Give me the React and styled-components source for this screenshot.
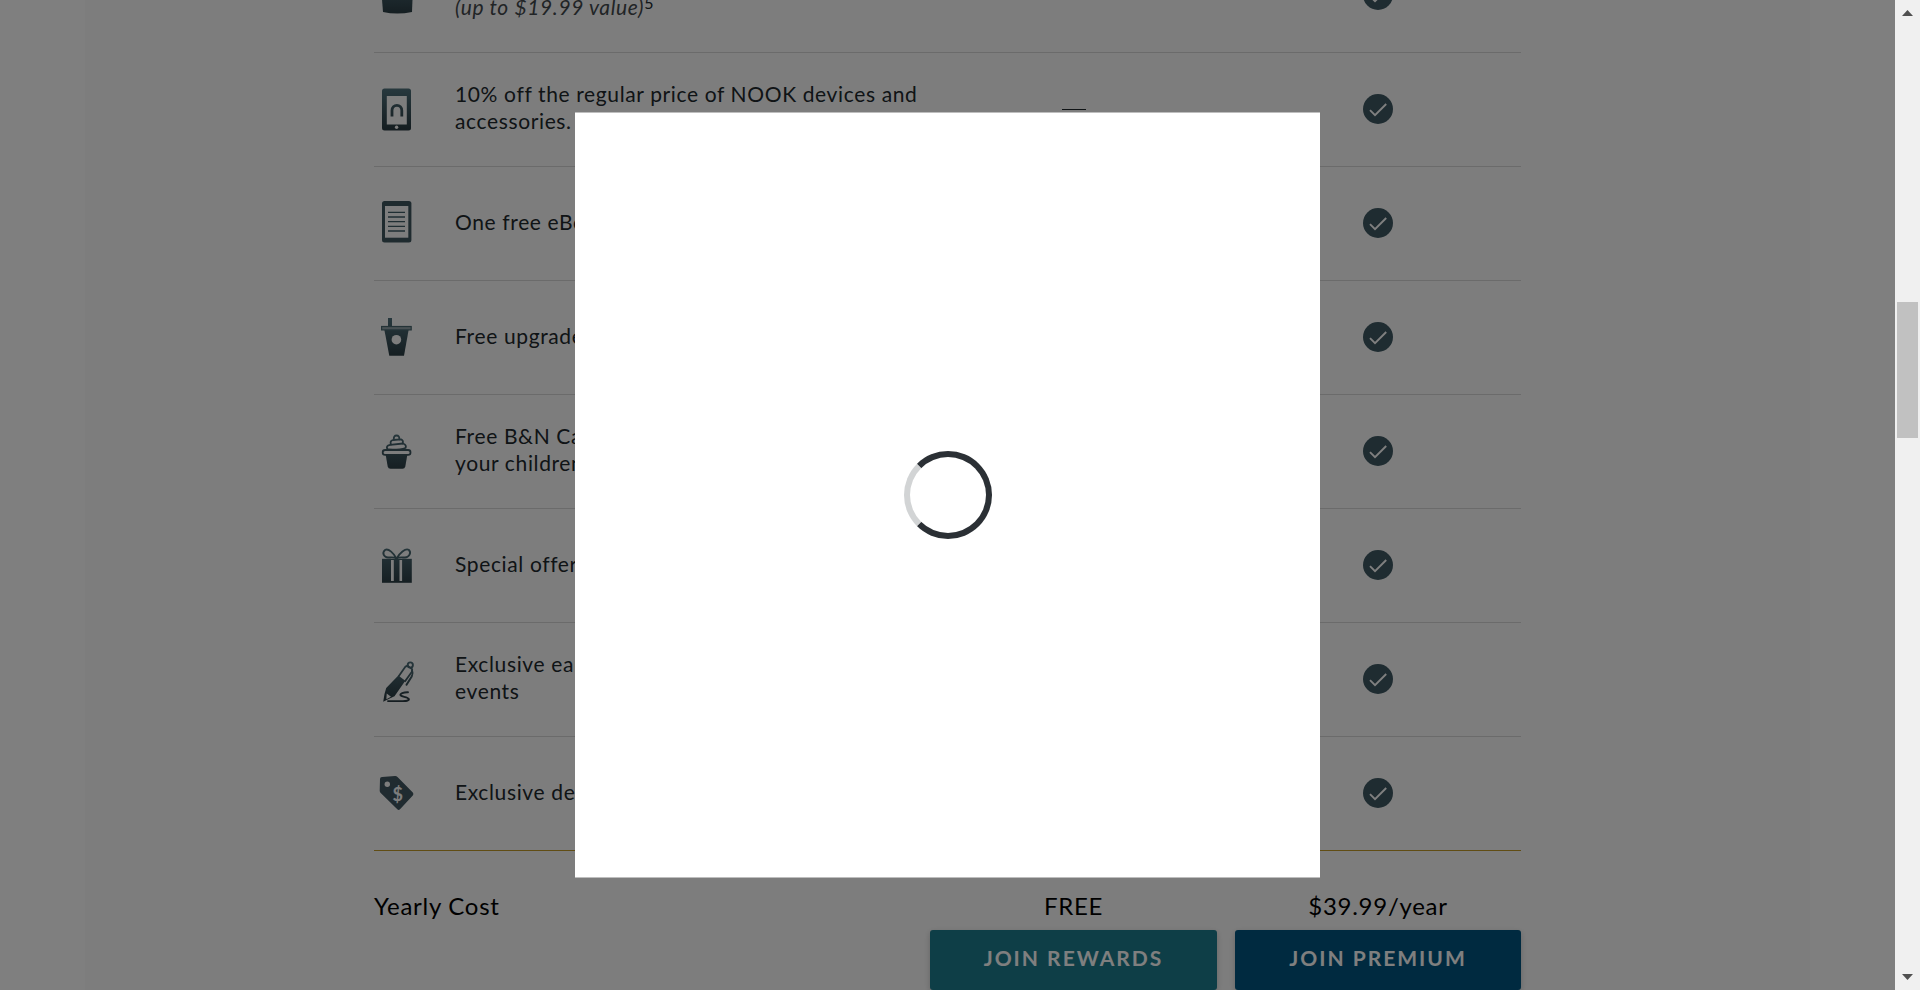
import React from 'react';
import styled, { createGlobalStyle } from 'styled-components';

const GlobalStyle = createGlobalStyle`
  *, *::before, *::after { box-sizing: border-box; }
  html, body { margin: 0; height: 100%; overflow: hidden; }
  body { background: #fff; font-family: Lato, "Liberation Sans", sans-serif; color: #21282d; }
`;

const Shell = styled.div`
  display: flex;
  height: 100vh;
  overflow: hidden;
`;

const Viewport = styled.div`
  position: relative;
  flex: 1;
  min-width: 0;
  overflow: hidden;
`;

const Page = styled.main`
  min-height: 100%;
  margin: 0 85px;
  background: #fbfbfb;
  overflow: hidden;
`;

const Benefits = styled.table`
  width: calc(100% - 60px);
  max-width: 1147px;
  margin: -61px auto 0;
  border-collapse: separate;
  border-spacing: 0;
  table-layout: fixed;
`;

const IconCol = styled.col`
  width: 81px;
`;

const TierCol = styled.col`
  width: ${(p) => p.$width}px;
`;

const Row = styled.tr`
  & > * {
    height: 114px;
    border-bottom: 1px solid ${(p) => (p.$last ? '#c29a28' : '#d6d6d6')};
  }
`;

const IconCell = styled.td`
  padding: 0;
  vertical-align: middle;
  svg { display: block; }
`;

const Benefit = styled.th`
  padding: 0 0 5px;
  font-size: 21px;
  line-height: 27px;
  letter-spacing: 0.03em;
  font-weight: 400;
  text-align: left;
  vertical-align: middle;
`;

const Note = styled.em`
  color: #43494d;
`;

const Mark = styled.sup`
  font-size: 16px;
  line-height: 0;
  vertical-align: 6px;
`;

const TierCell = styled.td`
  padding: 0 9px;
  text-align: center;
  vertical-align: middle;
`;

const CheckCell = styled(TierCell)`
  padding: 0 0 1px 9px;
  svg { display: block; margin: 0 auto; }
`;

const Dash = styled.span`
  display: block;
  width: 24px;
  height: 1px;
  margin: 0 auto;
  background: #21282d;
`;

const CostLabel = styled.th`
  height: 79px;
  padding: 40px 0 9px;
  color: #000;
  font-size: 24px;
  line-height: 30px;
  letter-spacing: 0.03em;
  font-weight: 400;
  text-align: left;
`;

const Cost = styled.td`
  padding: 40px ${(p) => (p.$last ? 0 : 9)}px 9px 9px;
  color: #000;
  font-size: 24px;
  line-height: 30px;
  letter-spacing: 0.03em;
  text-align: center;
`;

const ActionCell = styled.td`
  padding: 0 ${(p) => (p.$last ? 0 : 9)}px 0 9px;
`;

const JoinButton = styled.button`
  display: block;
  width: 100%;
  height: 60px;
  padding: 0 0 4px;
  border: 0;
  border-radius: 3px;
  background: ${(p) => (p.$premium ? '#005580' : '#1c7c8e')};
  box-shadow: 0 2px 6px rgba(0, 0, 0, 0.2);
  color: #fff;
  font: 700 21px/24px Lato, "Liberation Sans", sans-serif;
  letter-spacing: 2px;
`;

const Overlay = styled.div`
  position: absolute;
  inset: 0;
  display: flex;
  align-items: center;
  justify-content: center;
  background: rgba(0, 0, 0, 0.5);
`;

const Modal = styled.div`
  display: flex;
  align-items: center;
  justify-content: center;
  width: 745px;
  max-width: 90%;
  height: 766px;
  max-height: 90%;
  border: solid rgba(255, 255, 255, 0.5);
  border-width: 1px 0;
  background: #fff;
  background-clip: padding-box;
`;

const Spinner = styled.div`
  width: 88px;
  height: 88px;
  border: 6px solid #2b3035;
  border-left-color: #d2d4d5;
  border-radius: 50%;
`;

const Scrollbar = styled.div`
  display: flex;
  flex-direction: column;
  flex: 0 0 25px;
  background: #f0f0f0;
`;

const ScrollArrow = styled.div`
  display: flex;
  align-items: center;
  justify-content: center;
  height: 26px;
`;

const Track = styled.div`
  flex: 1;
  display: flex;
  flex-direction: column;
  padding: 0 2px;
  &::before { content: ""; flex: 276; }
  &::after { content: ""; flex: 526; }
`;

const Thumb = styled.div`
  flex: 136;
  background: #c1c1c1;
`;

const HiddenDefs = styled.svg`
  position: absolute;
`;

const INK = 'url(#ink)';
const PAPER = '#fbfbfb';

function Icon({ children }) {
  return (
    <svg width="45" height="45" viewBox="0 0 45 45" fill="none" aria-hidden="true">
      {children}
    </svg>
  );
}

function InkGradient() {
  return (
    <HiddenDefs width="0" height="0" aria-hidden="true">
      <linearGradient id="ink" gradientUnits="userSpaceOnUse" x1="0" y1="2" x2="0" y2="42">
        <stop offset="0" stopColor="#4f717c" />
        <stop offset="1" stopColor="#2a3b42" />
      </linearGradient>
    </HiddenDefs>
  );
}

const icons = {
  tote: (
    <Icon>
      <path d="M15 16v-6a7.500 7.500 0 0 1 15 0v6" stroke={INK} strokeWidth="2" />
      <path d="M7 14h32l-1 25q-15 3-29 0z" fill={INK} />
    </Icon>
  ),
  nook: (
    <Icon>
      <rect x="8" y="1.500" width="29" height="42" rx="2.500" fill={INK} />
      <rect x="12.800" y="9" width="20" height="28.500" fill={PAPER} />
      <path d="M18 29.500v-6a4.900 5.200 0 0 1 9.800 0v6" stroke={INK} strokeWidth="2.800" />
      <circle cx="22.600" cy="40.200" r="1.700" fill={PAPER} />
    </Icon>
  ),
  ebook: (
    <Icon>
      <rect x="8" y="0" width="29.400" height="41.600" rx="2.500" fill="#3e565f" />
      <rect x="11" y="5" width="23.300" height="31.700" fill={PAPER} />
      <path d="M14 11.400h17M14 16h17M14 20.700h17M14 25.300h17M14 30h17" stroke="#3e5c66" strokeWidth="1.300" />
    </Icon>
  ),
  cup: (
    <Icon>
      <path d="M14 3h4v9h-4z" fill={INK} />
      <path d="M10.300 14.500h24.400L30 40.800H15.300z" fill={INK} />
      <rect x="7.600" y="11.500" width="29.600" height="3.400" fill="#90a1a7" stroke="#48666f" strokeWidth="1.200" />
      <circle cx="22.400" cy="24.700" r="4.800" fill={PAPER} />
    </Icon>
  ),
  cupcake: (
    <Icon>
      <path d="M11.700 26h21.600l-2 11.500q-.5 2.200-2.800 2.200h-12q-2.300 0-2.800-2.200z" fill={INK} />
      <g stroke={INK} strokeWidth="1.800" strokeLinejoin="round" strokeLinecap="round">
        <rect x="8.700" y="21" width="27.800" height="4.800" rx="2.400" fill={PAPER} />
        <path d="M13.500 20.500q-2-3.800 2.500-4.700l13-1.300q4 1.500 2.500 4.500-6 2-17 1.500" />
        <path d="M17 15.500q-1.500-3.500 2-4.500l8-.6q3 1.500 1.500 4.100" />
        <path d="M19.800 10.500q-.3-4 2.700-4 3.200 0 2.800 3.900" />
      </g>
    </Icon>
  ),
  gift: (
    <Icon>
      <path d="M8 15.800h29.800v24H8z" fill={INK} />
      <path d="M17 17h2.800v21H17zM25.500 17h2.600v21h-2.600z" fill={PAPER} />
      <path
        d="M22.500 15.600C20 10.500 14.500 5 11 7c-3.500 3.200-.8 7.500 3 7.500 4 0 6.500-.6 8.500 1.100 2-1.700 5-1.100 8.500-1.100 3.800 0 6.700-4.500 4-7.500-3.500-2.500-9.800 3.500-12.500 8.600z"
        stroke={INK}
        strokeWidth="1.900"
      />
    </Icon>
  ),
  pen: (
    <Icon>
      <circle cx="36.300" cy="8" r="2.600" stroke={INK} strokeWidth="1.900" />
      <path d="M24.500 19.500 31.500 9.600l2-1 4.700 3.600-.3 2.600-7.200 10" stroke={INK} strokeWidth="1.800" strokeLinejoin="round" />
      <path d="m24.300 18.500 7 5.200-10.800 15.600-4.800 2.200-6.500 3.200L10.500 37l1.700-6z" fill={INK} />
      <path d="m12.700 36.600 4.300 3.100-4.600 2.600z" fill={PAPER} />
      <path d="M38 13.500q1.300 3-.3 6l-5.200 8.200" stroke={INK} strokeWidth="2" strokeLinecap="round" />
      <path d="M34 35.300c-4-.2-9 1.500-7.200 3.200 1.600 1.400 7 1.500 8 3.500.6 1.800-3.500 2.100-6 2.100H14" stroke={INK} strokeWidth="1.900" strokeLinecap="round" />
    </Icon>
  ),
  tag: (
    <Icon>
      <path
        d="M8 6 21 5q1.500-.1 2.500 1l15.300 15.600q1.300 1.400 0 2.800L26 38.300q-1.300 1.400-2.700 0L6.700 22q-1-1-1-2.300L6 8q0-1.900 2-2z"
        fill="#405660"
      />
      <circle cx="13.300" cy="13.300" r="2.700" fill={PAPER} />
      <text x="23.700" y="29.500" textAnchor="middle" fill={PAPER} fontFamily="Lato, sans-serif" fontWeight="700" fontSize="18">$</text>
    </Icon>
  ),
};

function Check() {
  return (
    <svg width="30" height="30" viewBox="0 0 30 30" fill="none" role="img" aria-label="Included">
      <circle cx="15" cy="15" r="15" fill="#3e5862" />
      <path d="m7 16.200 5 5L23.200 10" stroke="#fff" strokeWidth="1.900" />
    </svg>
  );
}

const benefits = [
  { icon: 'tote', text: <><br /><Note>(up to $19.99 value)</Note><Mark>5</Mark></> },
  { icon: 'nook', text: '10% off the regular price of NOOK devices and accessories.' },
  { icon: 'ebook', text: 'One free eBook' },
  { icon: 'cup', text: 'Free upgrade' },
  { icon: 'cupcake', text: <>Free B&amp;N Café treat for<br />your children</> },
  { icon: 'gift', text: 'Special offers' },
  { icon: 'pen', text: <>Exclusive early access to<br />events</> },
  { icon: 'tag', text: 'Exclusive deals' },
];

export default function App() {
  return (
    <Shell>
      <GlobalStyle />
      <InkGradient />
      <Viewport>
        <Page>
          <Benefits>
            <colgroup>
              <IconCol />
              <col />
              <TierCol $width={305} />
              <TierCol $width={295} />
            </colgroup>
            <tbody>
              {benefits.map((b, i) => (
                <Row key={b.icon} $last={i === benefits.length - 1}>
                  <IconCell>{icons[b.icon]}</IconCell>
                  <Benefit scope="row">{b.text}</Benefit>
                  <TierCell><Dash /></TierCell>
                  <CheckCell><Check /></CheckCell>
                </Row>
              ))}
            </tbody>
            <tfoot>
              <tr>
                <CostLabel scope="row" colSpan={2}>Yearly Cost</CostLabel>
                <Cost>FREE</Cost>
                <Cost $last>$39.99/year</Cost>
              </tr>
              <tr>
                <ActionCell colSpan={2} />
                <ActionCell><JoinButton type="button">JOIN REWARDS</JoinButton></ActionCell>
                <ActionCell $last><JoinButton type="button" $premium>JOIN PREMIUM</JoinButton></ActionCell>
              </tr>
            </tfoot>
          </Benefits>
        </Page>
        <Overlay>
          <Modal role="dialog" aria-modal="true" aria-label="Loading">
            <Spinner role="status" />
          </Modal>
        </Overlay>
      </Viewport>
      <Scrollbar aria-hidden="true">
        <ScrollArrow>
          <svg width="11" height="6" viewBox="0 0 11 6"><path d="M0 6 5.500 0 11 6z" fill="#505050" /></svg>
        </ScrollArrow>
        <Track><Thumb /></Track>
        <ScrollArrow>
          <svg width="11" height="6" viewBox="0 0 11 6"><path d="M0 0h11L5.500 6z" fill="#505050" /></svg>
        </ScrollArrow>
      </Scrollbar>
    </Shell>
  );
}
